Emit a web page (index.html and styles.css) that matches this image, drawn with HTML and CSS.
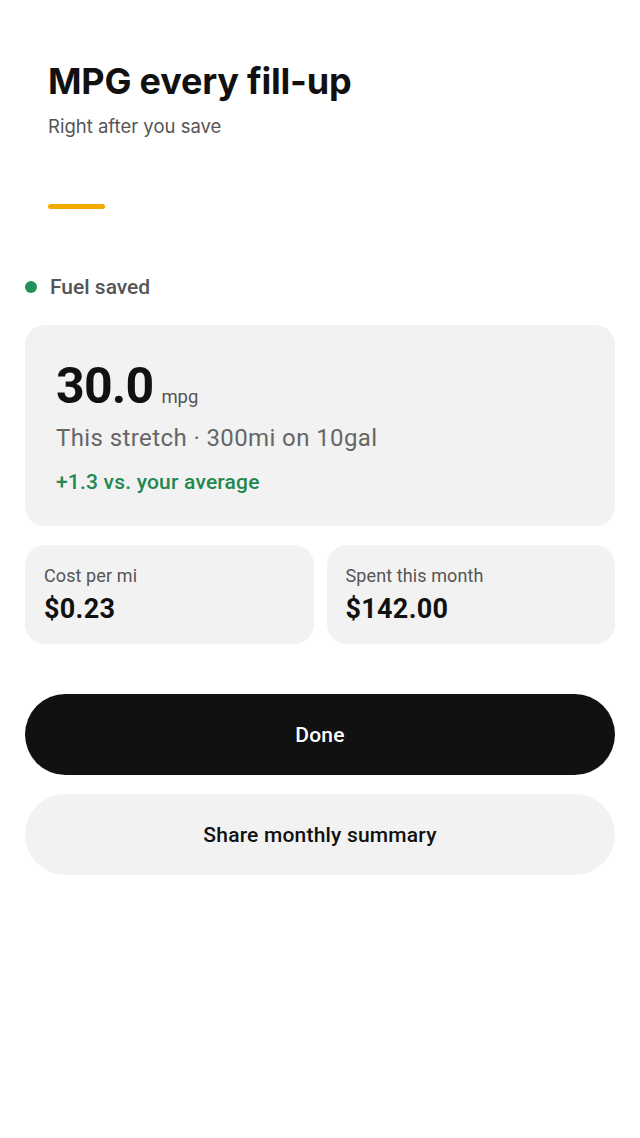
FILE: index.html
```html
<!DOCTYPE html>
<html>

<head>
    <link rel="stylesheet" href="styles.css">
</head>

<body>
    <div class="screen">
        <div class="header">
            <h1 class="title">MPG every fill-up</h1>
            <p class="subtitle">Right after you save</p>
            <div class="accent"></div>
        </div>

        <div class="status">
            <span class="dot"></span>
            <span class="status-text">Fuel saved</span>
        </div>

        <div class="card main-card">
            <div class="big-row">
                <span class="big-num">30.0</span>
                <span class="unit">mpg</span>
            </div>
            <div class="stretch">This stretch · 300mi on 10gal</div>
            <div class="delta">+1.3 vs. your average</div>
        </div>

        <div class="stats">
            <div class="card stat">
                <div class="stat-label">Cost per mi</div>
                <div class="stat-value">$0.23</div>
            </div>
            <div class="card stat">
                <div class="stat-label">Spent this month</div>
                <div class="stat-value">$142.00</div>
            </div>
        </div>

        <div class="actions">
            <button class="btn btn-primary">Done</button>
            <button class="btn btn-secondary">Share monthly summary</button>
        </div>
    </div>
</body>

</html>
```

FILE: styles.css
```css
body {
    margin: 0;
    background: #ffffff;
    font-family: Roboto, "Liberation Sans", sans-serif;
    color: #111111;
}

.screen {
    width: 590px;
    padding: 0 25px;
}

.header {
    padding: 58px 0 0 23px;
}

.title {
    margin: 0;
    font-family: Inter, "Liberation Sans", sans-serif;
    font-size: 36px;
    font-weight: 700;
    line-height: 46px;
    letter-spacing: -0.2px;
    color: #111111;
}

.subtitle {
    margin: 9px 0 0;
    font-family: Inter, "Liberation Sans", sans-serif;
    font-size: 18.5px;
    line-height: 26px;
    color: #555555;
}

.accent {
    width: 57px;
    height: 5px;
    margin-top: 65px;
    border-radius: 3px;
    background: #f2a900;
}

.status {
    display: flex;
    align-items: center;
    gap: 13px;
    margin-top: 65px;
    height: 26px;
}

.dot {
    width: 12px;
    height: 12px;
    border-radius: 50%;
    background: #23915a;
}

.status-text {
    font-size: 21px;
    font-weight: 500;
    color: #555555;
}

.card {
    background: #f2f2f2;
    border-radius: 20px;
}

.main-card {
    margin-top: 25px;
    height: 201px;
    box-sizing: border-box;
    padding: 32px 31px 0;
}

.big-row {
    display: flex;
    align-items: baseline;
    gap: 8px;
    height: 58px;
}

.big-num {
    font-size: 50px;
    font-weight: 700;
    line-height: 58px;
    letter-spacing: -0.8px;
    color: #111111;
}

.unit {
    font-size: 18.5px;
    color: #555555;
}

.stretch {
    margin-top: 8px;
    font-size: 24px;
    line-height: 30px;
    letter-spacing: 0.4px;
    color: #666666;
}

.delta {
    margin-top: 16px;
    font-size: 21px;
    font-weight: 500;
    line-height: 26px;
    letter-spacing: 0.2px;
    color: #23874f;
}

.stats {
    display: grid;
    grid-template-columns: 1fr 1fr;
    gap: 13px;
    margin-top: 19px;
}

.stat {
    height: 99px;
    box-sizing: border-box;
    padding: 19px 19px 0;
}

.stat-label {
    font-size: 18px;
    line-height: 24px;
    letter-spacing: 0.1px;
    color: #555555;
}

.stat-value {
    margin-top: 5px;
    font-size: 27px;
    font-weight: 700;
    line-height: 32px;
    letter-spacing: 0.3px;
    color: #111111;
}

.actions {
    display: flex;
    flex-direction: column;
    gap: 19px;
    margin-top: 50px;
}

.btn {
    height: 81px;
    border: none;
    border-radius: 41px;
    font-family: Roboto, "Liberation Sans", sans-serif;
    font-size: 21px;
    font-weight: 500;
    letter-spacing: 0.2px;
    cursor: pointer;
}

.btn-primary {
    background: #111111;
    color: #ffffff;
}

.btn-secondary {
    background: #f2f2f2;
    color: #111111;
}
```
